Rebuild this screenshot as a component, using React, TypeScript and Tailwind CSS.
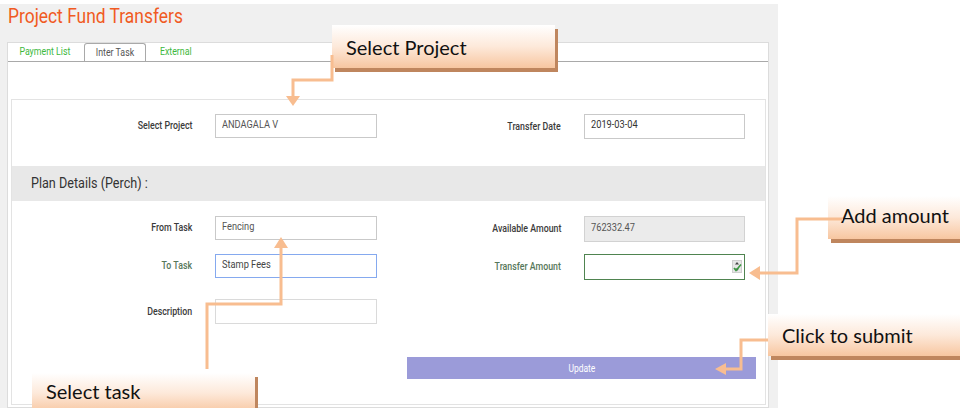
import React from 'react';

// squished text – the original UI capture is narrower than normal Roboto
function Sq({ children, className = '' }: { children: React.ReactNode; className?: string }) {
  return <span className={'inline-block whitespace-nowrap ' + className}>{children}</span>;
}

function Label({ children, w, tone = 'text-[#3b3b3b]' }: { children: React.ReactNode; w: string; tone?: string }) {
  return (
    <div className={`${w} shrink-0 text-right text-[11px] font-medium leading-[14px] ${tone}`}>
      <Sq className="origin-right scale-x-[0.8]">{children}</Sq>
    </div>
  );
}

interface BoxProps {
  value?: string;
  w: string;
  h?: string;
  border?: string;
  bg?: string;
  tone?: string;
  children?: React.ReactNode;
}

function Box({ value, w, h = 'h-[24px]', border = 'border-[#c9c9c9]', bg = 'bg-white', tone = 'text-[#555]', children }: BoxProps) {
  return (
    <div className={`${w} ${h} ${border} ${bg} ${tone} relative flex shrink-0 items-center border pb-[2px] pl-[6px] text-[11px]`}>
      {value && <Sq className="origin-left scale-x-[0.84]">{value}</Sq>}
      {children}
    </div>
  );
}

function Spinner() {
  return (
    <svg className="absolute right-[2px] top-[5px]" width="10" height="13" viewBox="0 0 10 13">
      <rect x="0.5" y="0.5" width="9" height="12" fill="#e6e6e6" stroke="#cfcfcf" />
      <polygon points="3,4.5 5,2 7,4.5" fill="#444" />
      <polygon points="3,8.5 5,11 7,8.5" fill="#444" />
      <polyline points="2,8 4,10.5 9,4.5" fill="none" stroke="#3a9a40" strokeWidth="1.6" />
    </svg>
  );
}

function Callout({ text, pos }: { text: string; pos: string }) {
  return (
    <div
      className={`absolute ${pos} flex items-center bg-gradient-to-b from-white via-[#fde9da] to-[#f7c6a0] font-[Lato] text-[20px] text-[#111] shadow-[3px_4px_0_#bf865e]`}
    >
      {text}
    </div>
  );
}

export default function App() {
  return (
    <div className="relative h-[408px] w-[960px] overflow-hidden bg-white font-[Roboto]">
      <div className="mt-[4px] h-[404px] w-[778px] bg-[#f0f0f0] pt-[2px]">
        <h1 className="pl-[8px] text-[20px] leading-[20px] text-[#f05a22]">
          <Sq className="origin-left scale-x-[0.87]">Project Fund Transfers</Sq>
        </h1>

        <div className="ml-[7px] mt-[16px] h-[366px] w-[762px] border border-[#dcdcdc] bg-white">
          {/* Tabs */}
          <div className="flex h-[19px] border-b border-[#a9a9a9] text-[11px] leading-[18px]">
            <div className="mr-[2px] w-[74px] text-center text-[#3cb83c]">
              <Sq className="scale-x-[0.8]">Payment List</Sq>
            </div>
            <div className="mr-[2px] w-[62px] rounded-t-[3px] border border-b-0 border-[#a9a9a9] text-center text-[#555]">
              <Sq className="scale-x-[0.8]">Inter Task</Sq>
            </div>
            <div className="w-[55px] text-center text-[#3cb83c]">
              <Sq className="scale-x-[0.8]">External</Sq>
            </div>
          </div>

          {/* Form panel */}
          <div className="ml-[3px] mt-[37px] w-[755px] border border-[#e3e3e3]">
            <div className="flex h-[66px] items-start pt-[14px]">
              <div className="flex items-center gap-[23px]">
                <Label w="w-[180px]">Select Project</Label>
                <Box w="w-[162px]" value="ANDAGALA V" />
              </div>
              <div className="ml-[14px] flex items-center gap-[23px]">
                <Label w="w-[170px]">Transfer Date</Label>
                <Box w="w-[161px]" h="h-[25px]" tone="text-[#333]" value="2019-03-04" />
              </div>
            </div>

            <div className="flex h-[35px] items-center bg-[#e8e8e8] pl-[19px] text-[15px] text-[#333]">
              <Sq className="origin-left scale-x-[0.84]">Plan Details (Perch) :</Sq>
            </div>

            <div className="pt-[15px]">
              <div className="flex items-start">
                <div className="flex flex-col">
                  <div className="flex items-center gap-[23px]">
                    <Label w="w-[180px]">From Task</Label>
                    <Box w="w-[162px]" value="Fencing" />
                  </div>
                  <div className="mt-[14px] flex items-center gap-[23px]">
                    <Label w="w-[180px]" tone="text-[#56775a]">To Task</Label>
                    <Box w="w-[162px]" border="border-[#85a9ef]" tone="text-[#444]" value="Stamp Fees" />
                  </div>
                  <div className="mt-[21px] flex items-center gap-[23px]">
                    <Label w="w-[180px]">Description</Label>
                    <Box w="w-[162px]" h="h-[25px]" border="border-[#dadada]" />
                  </div>
                </div>
                <div className="ml-[14px] flex flex-col">
                  <div className="flex items-center gap-[23px]">
                    <Label w="w-[170px]">Available Amount</Label>
                    <Box w="w-[161px]" h="h-[26px]" bg="bg-[#ebebeb]" border="border-[#d2d2d2]" value="762332.47" />
                  </div>
                  <div className="mt-[12px] flex items-center gap-[23px]">
                    <Label w="w-[170px]" tone="text-[#56775a]">Transfer Amount</Label>
                    <Box w="w-[161px]" h="h-[26px]" border="border-[#4f8450]">
                      <Spinner />
                    </Box>
                  </div>
                </div>
              </div>

              <button className="mb-[25px] ml-[395px] mt-[33px] flex h-[22px] w-[349px] items-center justify-center bg-[#9b9bd9] text-[10px] text-white">
                <Sq className="scale-x-[0.85]">Update</Sq>
              </button>
            </div>
          </div>
        </div>
      </div>

      {/* Annotation callouts */}
      <Callout text="Select Project" pos="left-[332px] top-[25px] h-[43px] w-[223px] pl-[14px]" />
      <Callout text="Add amount" pos="left-[828px] top-[196px] h-[43px] w-[140px] pl-[13px] pb-[5px]" />
      <Callout text="Click to submit" pos="left-[768px] top-[314px] h-[42px] w-[200px] pl-[14px]" />
      <Callout text="Select task" pos="left-[32px] top-[373px] h-[40px] w-[223px] pl-[14px] pb-[5px]" />

      <svg className="pointer-events-none absolute left-0 top-0" width="960" height="408">
        <g fill="none" stroke="#f8bd90" strokeWidth="3">
          <polyline points="332,55 332,80 293,80 293,97" />
          <polyline points="843,219 797,219 797,273 758,273" />
          <polyline points="768,340 741,340 741,369 724,369" />
          <polyline points="207,369 207,304 281,304 281,247" />
        </g>
        <g fill="#f8bd90">
          <polygon points="286,96 300,96 293,106" />
          <polygon points="760,266 760,280 749,273" />
          <polygon points="726,363 726,375 715,369" />
          <polygon points="274,248 288,248 281,237" />
        </g>
      </svg>
    </div>
  );
}
